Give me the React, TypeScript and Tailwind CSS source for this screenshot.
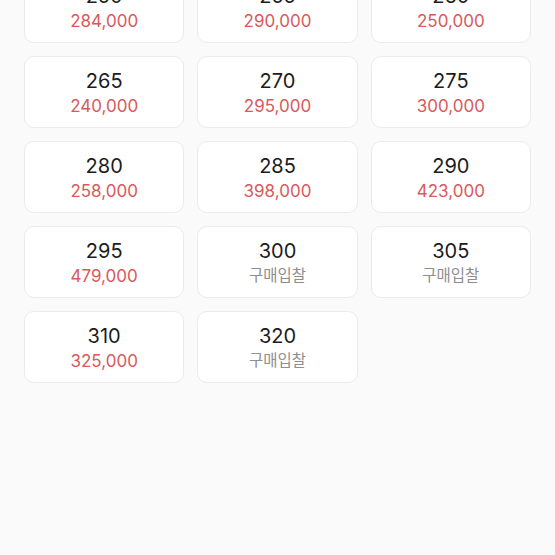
import React from "react";

type SizeItem = {
  size: string;
  price?: string;
};

const sizes: SizeItem[] = [
  { size: "250", price: "284,000" },
  { size: "255", price: "290,000" },
  { size: "260", price: "250,000" },
  { size: "265", price: "240,000" },
  { size: "270", price: "295,000" },
  { size: "275", price: "300,000" },
  { size: "280", price: "258,000" },
  { size: "285", price: "398,000" },
  { size: "290", price: "423,000" },
  { size: "295", price: "479,000" },
  { size: "300" },
  { size: "305" },
  { size: "310", price: "325,000" },
  { size: "320" },
];

const App: React.FC = () => {
  return (
    <div
      className="w-[555px] h-[555px] overflow-hidden bg-[#fafafa]"
      style={{ fontFamily: 'Inter, "Noto Sans CJK KR", sans-serif' }}
    >
      <div className="grid grid-cols-3 gap-x-[13px] gap-y-[13px] px-6 mt-[-29px]">
        {sizes.map((item) => (
          <div
            key={item.size}
            className="h-[72px] pt-1 flex flex-col items-center justify-center bg-white border border-[#ebebeb] rounded-[10px]"
          >
            <span className="text-[20px] leading-[24px] text-[#1c1c1c]">{item.size}</span>
            {item.price ? (
              <span className="text-[17px] leading-[26px] text-[#d9595c]">{item.price}</span>
            ) : (
              <span className="text-[15.5px] leading-[26px] text-[#8e8e8e]">구매입찰</span>
            )}
          </div>
        ))}
      </div>
    </div>
  );
};

export default App;
